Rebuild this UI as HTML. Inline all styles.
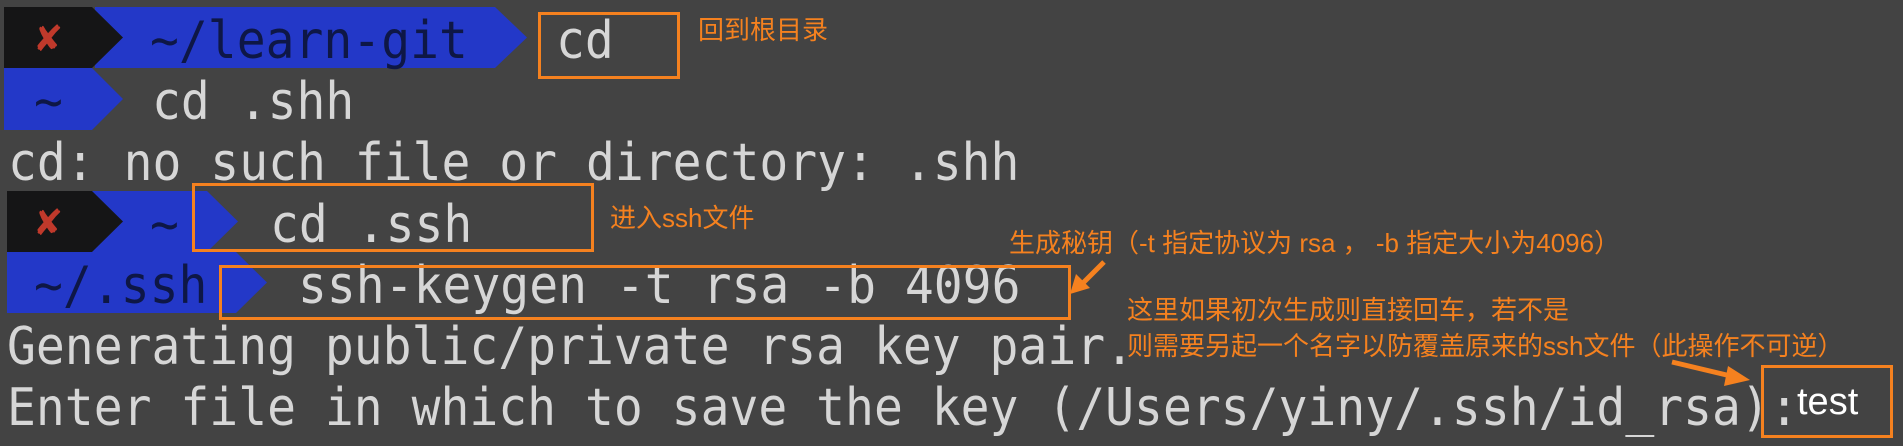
<!DOCTYPE html>
<html><head><meta charset="utf-8"><style>
html,body{margin:0;padding:0;background:#434343;width:1903px;height:446px;overflow:hidden;position:relative}
.t{position:absolute;font-family:"DejaVu Sans Mono","Liberation Mono",monospace;font-size:48px;line-height:61px;height:61px;color:#d6d6d6;white-space:pre;transform:scaleY(1.08);transform-origin:0 75%}
.p{color:#0e1746}
.a{position:absolute;font-family:"Liberation Sans","Noto Sans CJK SC",sans-serif;font-size:26px;line-height:30px;color:#f5811f;white-space:pre}
.x{position:absolute;color:#c0392b;font-family:"DejaVu Sans",sans-serif;font-weight:bold;font-size:36px;line-height:40px}
.b{position:absolute;border:3px solid #f5811f;box-sizing:border-box}
</style></head><body>
<svg width="1903" height="446" style="position:absolute;left:0;top:0">
<polygon points="95,7 495,7 527,37.5 495,68 95,68" fill="#2338c8"/>
<polygon points="4,7 92,7 123,37.5 92,68 4,68" fill="#151516"/>
<polygon points="4,68 92,68 123,99 92,130 4,130" fill="#2338c8"/>
<polygon points="90,191 207,191 238,221.5 207,252 90,252" fill="#2338c8"/>
<polygon points="7,191 92,191 123,221.5 92,252 7,252" fill="#151516"/>
<polygon points="7,252 236,252 267,282.5 236,313 7,313" fill="#2338c8"/>
<line x1="1104" y1="262" x2="1082" y2="284" stroke="#f5811f" stroke-width="5"/>
<polygon points="1070,294 1076,274 1090,288" fill="#f5811f"/>
<line x1="1672" y1="362" x2="1735" y2="377" stroke="#f5811f" stroke-width="5"/>
<polygon points="1750,380 1728,366 1724,386" fill="#f5811f"/>
</svg>
<div class="x" style="left:33px;top:20px">✘</div>
<div class="x" style="left:33px;top:204px">✘</div>
<div class="t p" style="left:150px;top:12px">~/learn-git</div>
<div class="t" style="left:556px;top:12px">cd</div>
<div class="t p" style="left:34px;top:73px">~</div>
<div class="t" style="left:152px;top:73px">cd .shh</div>
<div class="t" style="left:8px;top:134px">cd: no such file or directory: .shh</div>
<div class="t p" style="left:150px;top:196px">~</div>
<div class="t" style="left:270px;top:196px">cd .ssh</div>
<div class="t p" style="left:34px;top:257px">~/.ssh</div>
<div class="t" style="left:298px;top:257px">ssh-keygen -t rsa -b 4096</div>
<div class="t" style="left:7px;top:318px">Generating public/private rsa key pair.</div>
<div class="t" style="left:7px;top:379px">Enter file in which to save the key (/Users/yiny/.ssh/id_rsa):</div>
<div class="b" style="left:538px;top:12px;width:142px;height:67px"></div>
<div class="b" style="left:192px;top:183px;width:402px;height:69px"></div>
<div class="b" style="left:219px;top:265px;width:852px;height:55px"></div>
<div class="b" style="left:1761px;top:365px;width:132px;height:73px"></div>
<div style="position:absolute;left:1797px;top:380px;font-family:'Liberation Sans',sans-serif;font-size:38px;line-height:44px;color:#fff">test</div>
<div class="a" style="left:698px;top:15px">回到根目录</div>
<div class="a" style="left:610px;top:203px">进入ssh文件</div>
<div class="a" style="left:1009px;top:228px">生成秘钥（-t 指定协议为 rsa ， -b 指定大小为4096）</div>
<div class="a" style="left:1127px;top:295px">这里如果初次生成则直接回车，若不是</div>
<div class="a" style="left:1127px;top:331px">则需要另起一个名字以防覆盖原来的ssh文件（此操作不可逆）</div>
</body></html>
